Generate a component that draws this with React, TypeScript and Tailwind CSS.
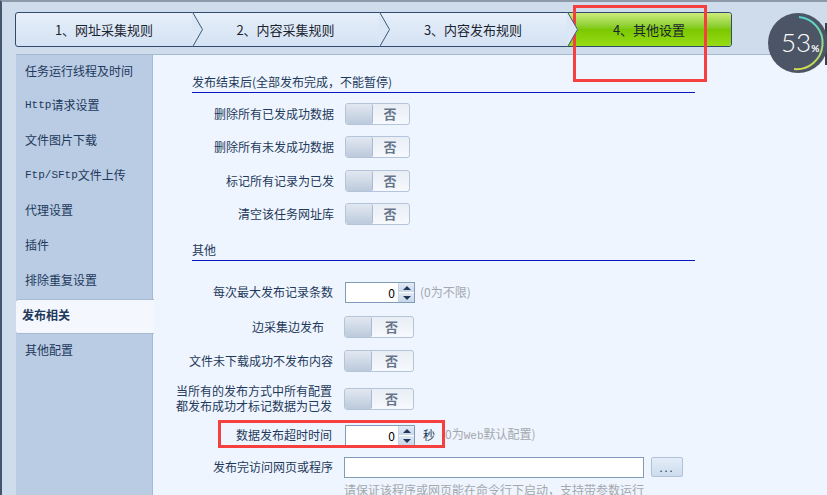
const font = { fontFamily: '"Noto Sans CJK SC", "Liberation Sans", sans-serif' };

const sideItems = ['任务运行线程及时间', 'Http请求设置', '文件图片下载', 'Ftp/SFtp文件上传', '代理设置', '插件', '排除重复设置', '发布相关', '其他配置'];

function Chevron({ left }: { left: number }) {
  return (
    <svg className="absolute top-[-1px] z-10" style={{ left }} width="13" height="35" viewBox="0 0 13 35">
      <polygon points="0,0 11,17.5 0,35" fill="#dbe7f5" />
      <polyline points="0.5,0 10.5,17.5 0.5,35" fill="none" stroke="#3b5878" strokeWidth="1" />
    </svg>
  );
}

function Tab({ width, text, active }: { width: string; text: string; active?: boolean }) {
  return (
    <div className={`${width} flex h-full shrink-0 items-center justify-center text-[13px] text-[#1b2430] ${active ? 'rounded-r-[3px] bg-gradient-to-b from-[#cdec78] via-[#7cc800] to-[#97dc14]' : ''}`}>
      {text}
    </div>
  );
}

function Toggle({ wide }: { wide?: boolean }) {
  return (
    <div className={`${wide ? 'w-[70px]' : 'w-[65px]'} flex h-[22px] shrink-0 overflow-hidden rounded-[3px] border border-[#b4c4da] bg-gradient-to-b from-[#e9eef5] to-[#f6f9fd]`}>
      <div className="h-full w-[27px] rounded-[2px] border-r border-[#a9bad2] bg-gradient-to-b from-[#e2e8f1] to-[#bccadc]" />
      <div className="flex flex-1 items-center justify-center pb-[2px] pr-[2px] text-[13px] font-bold leading-none text-[#66758a]">否</div>
    </div>
  );
}

function Label({ children, className = '' }: { children: React.ReactNode; className?: string }) {
  return <div className={`w-[181px] shrink-0 pb-[2px] text-right text-[12px] leading-[15px] text-[#1e395b] ${className}`}>{children}</div>;
}

function Heading({ children, className = '' }: { children: React.ReactNode; className?: string }) {
  return <div className={`ml-[39px] h-[20px] w-[503px] border-b border-[#0a14c8] text-[12px] leading-[18px] text-[#1e395b] ${className}`}>{children}</div>;
}

function Spin() {
  return (
    <div className="flex h-[21px] w-[70px] shrink-0 border border-[#7f9db9] bg-white">
      <div className="flex-1 pr-[3px] text-right text-[12px] leading-[19px] text-black">0</div>
      <div className="flex w-[16px] flex-col gap-px border-l border-[#c5d3e5] bg-white">
        <div className="flex flex-1 items-center justify-center bg-gradient-to-b from-[#e4ecf6] to-[#c8d7e9]">
          <div className="h-0 w-0 border-x-[4px] border-b-[4px] border-x-transparent border-b-[#1e395b]" />
        </div>
        <div className="flex flex-1 items-center justify-center bg-gradient-to-b from-[#dfe8f3] to-[#c8d7e9]">
          <div className="h-0 w-0 border-x-[4px] border-t-[4px] border-x-transparent border-t-[#1e395b]" />
        </div>
      </div>
    </div>
  );
}

export default function App() {
  return (
    <div style={font} className="relative flex h-[495px] w-[827px] flex-col overflow-hidden border-l-2 border-t-2 border-l-[#44566c] border-t-[#8f9aa8] bg-[#cfdcec]">
      {/* Step bar */}
      <div className="relative ml-[13px] mt-[10px] flex h-[35px] w-[717px] shrink-0 rounded-[3px] border border-[#2f4c6e] bg-gradient-to-b from-[#e6effa] to-[#d4e2f3]">
        <Tab width="w-[176px]" text="1、网址采集规则" />
        <Tab width="w-[187px]" text="2、内容采集规则" />
        <Tab width="w-[188px]" text="3、内容发布规则" />
        <Tab width="flex-1" text="4、其他设置" active />
        <Chevron left={176} />
        <Chevron left={363} />
        <Chevron left={551} />
      </div>

      {/* Body */}
      <div className="mt-[7px] flex min-h-0 flex-1 pl-[14px]">
        <div className="flex w-[137px] shrink-0 flex-col border-r border-t border-[#a5b9d3] bg-[#b9cce4]">
          {sideItems.map((item, i) =>
            item === '发布相关' ? (
              <div key={item} className="z-10 -mr-[2px] flex h-[35px] shrink-0 items-center rounded-l-[3px] border-y border-[#a5b9d3] bg-[#f4f8fe] pb-[3px] pl-[6px] text-[12px] font-bold text-[#1e395b]">
                {item}
              </div>
            ) : (
              <div key={item} className={`${i === 0 ? 'h-[34px]' : 'h-[35px]'} flex shrink-0 items-center pb-[3px] pl-[9px] text-[12px] text-[#1e395b]`}>
                {item.startsWith('Http') || item.startsWith('Ftp') ? (
                  <>
                    <span style={{ fontFamily: '"Liberation Mono", monospace' }} className="text-[11px]">
                      {item.startsWith('Http') ? 'Http' : 'Ftp/SFtp'}
                    </span>
                    {item.startsWith('Http') ? '请求设置' : '文件上传'}
                  </>
                ) : (
                  item
                )}
              </div>
            ),
          )}
        </div>

        <div className="min-w-0 flex-1 border-t border-[#a5b9d3] bg-[#eef5fe] pt-[18px]">
          <Heading>发布结束后(全部发布完成{'\uFF0C'}不能暂停)</Heading>
          <div className="mt-[10px] flex items-center gap-[11px]"><Label>删除所有已发成功数据</Label><Toggle /></div>
          <div className="mt-[11px] flex items-center gap-[11px]"><Label>删除所有未发成功数据</Label><Toggle /></div>
          <div className="mt-[12px] flex items-center gap-[11px]"><Label>标记所有记录为已发</Label><Toggle /></div>
          <div className="mt-[11px] flex items-center gap-[11px]"><Label>清空该任务网址库</Label><Toggle /></div>

          <Heading className="mt-[16px]">其他</Heading>

          <div className="mt-[21px] flex items-center gap-[11px]">
            <Label className="pr-[1px]">每次最大发布记录条数</Label>
            <Spin />
            <span className="ml-[-6px] pb-[2px] text-[12px] text-[#a3a8ae]">(0为不限)</span>
          </div>
          <div className="mt-[13px] flex items-center gap-[10px]"><Label className="pr-[10px]">边采集边发布</Label><Toggle wide /></div>
          <div className="mt-[12px] flex items-center gap-[10px]"><Label className="pr-[1px]">文件未下载成功不发布内容</Label><Toggle wide /></div>
          <div className="mt-[11px] flex items-center gap-[10px]">
            <Label className="pr-[2px]">
              <div>当所有的发布方式中所有配置</div>
              <div>都发布成功才标记数据为已发</div>
            </Label>
            <Toggle wide />
          </div>
          <div className="mt-[10px] flex items-center gap-[11px]">
            <Label className="pr-[2px]">数据发布超时时间</Label>
            <Spin />
            <span className="ml-[-3px] w-[15px] pb-[2px] text-[12px] text-[#1e395b]">秒</span>
            <span className="ml-[-8px] pb-[2px] text-[12px] text-[#a3a8ae]">
              (0为<span style={{ fontFamily: '"Liberation Mono", monospace' }} className="text-[11px]">Web</span>默认配置)
            </span>
          </div>
          <div className="mt-[10px] flex items-center gap-[10px]">
            <Label className="pr-[1px]">发布完访问网页或程序</Label>
            <div className="h-[21px] w-[300px] shrink-0 border border-[#7f9db9] bg-white" />
            <div className="ml-[-3px] flex h-[20px] w-[32px] items-center justify-center rounded-[2px] border border-[#b0c2da] bg-gradient-to-b from-[#e4edf8] to-[#cddcee] text-[11px] tracking-[2px] text-[#1e395b]">...</div>
          </div>
          <div className="ml-[191px] mt-[4px] text-[12px] leading-[15px] text-[#a3a8ae]">请保证该程序或网页能在命令行下启动{'\uFF0C'}支持带参数运行</div>
        </div>
      </div>

      {/* Annotation rectangles */}
      <div className="absolute left-[571px] top-[3px] h-[77px] w-[134px] border-[3px] border-[#f64040]" />
      <div className="absolute left-[216px] top-[418px] h-[28px] w-[227px] border-[3px] border-[#f64040]" />

      {/* Usage gauge */}
      <div className="absolute left-[823px] top-[21px] h-[42px] w-[4px] bg-[#3b404b]" />
      <div className="absolute left-[766px] top-[11px] h-[60px] w-[60px] rounded-full bg-[#4c5566]">
        <svg className="absolute inset-0" width="60" height="60" viewBox="0 0 60 60">
          <defs>
            <linearGradient id="ring" x1="0" y1="0" x2="0" y2="1">
              <stop offset="0" stopColor="#4fd4cc" />
              <stop offset="1" stopColor="#d2dc50" />
            </linearGradient>
          </defs>
          <path d="M31 4 A26 26 0 0 1 26 56" fill="none" stroke="url(#ring)" strokeWidth="2" />
        </svg>
        <div style={{ fontFamily: 'Lato, sans-serif' }} className="absolute left-[13px] top-[14px] flex items-baseline font-light leading-none text-white">
          <span className="text-[26px] leading-[30px]">53</span>
          <span className="text-[10px] font-bold">%</span>
        </div>
      </div>
    </div>
  );
}
